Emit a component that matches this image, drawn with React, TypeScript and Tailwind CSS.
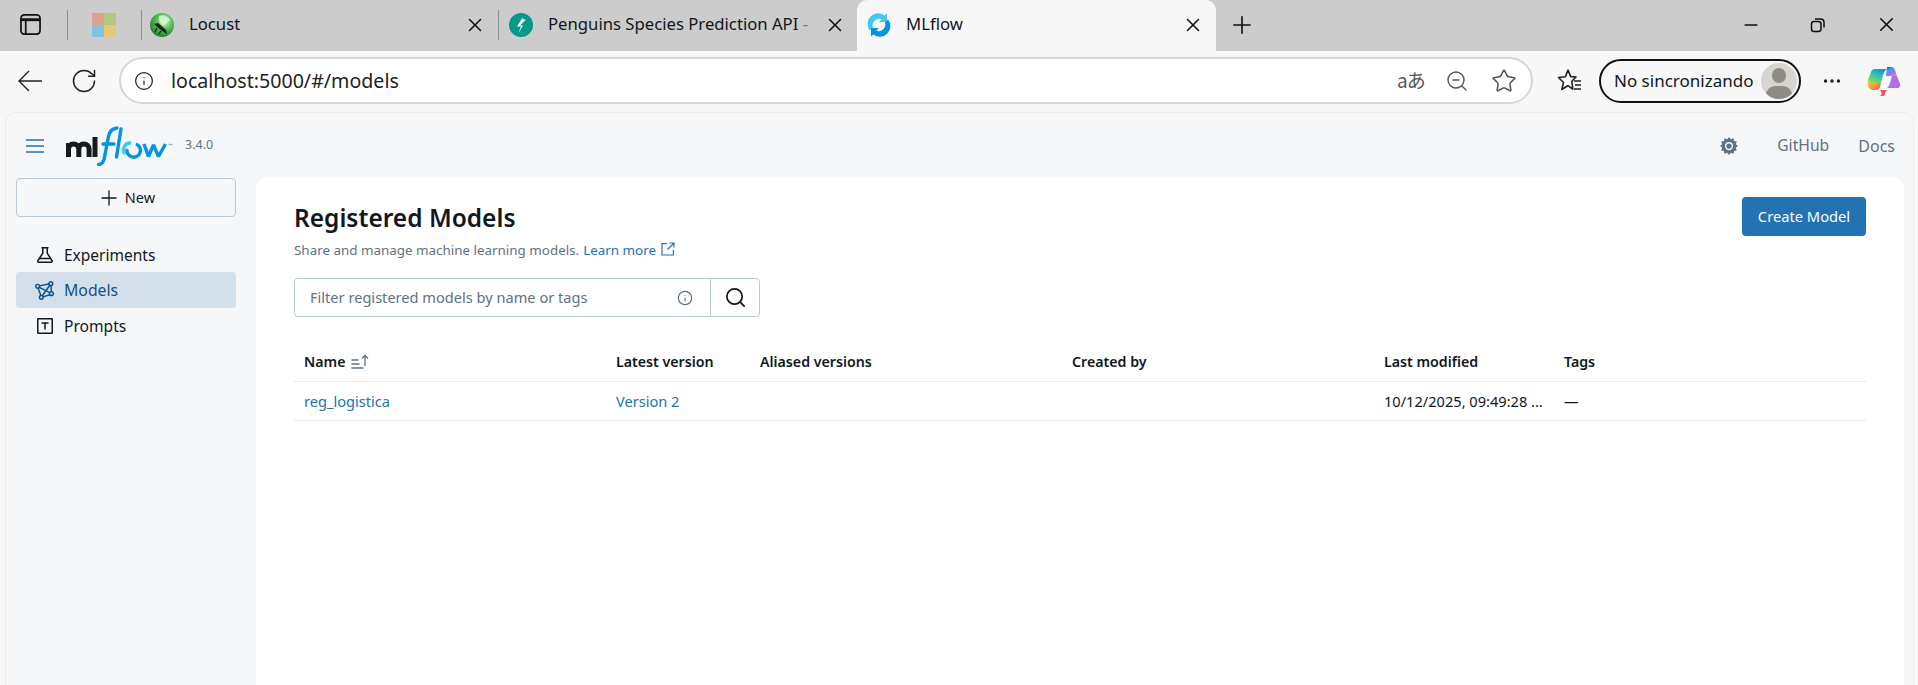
import React from "react";
import { RotateCw, Info, Plus, X, Minus, Star, ZoomOut, Search, MoreHorizontal } from "lucide-react";

const Divider = () => <div className="w-px h-[30px] bg-[#8f8f8f] shrink-0" />;

function LocustIcon() {
  return (
    <svg viewBox="0 0 24 24" className="w-6 h-6 shrink-0">
      <defs>
        <radialGradient id="lg" cx="0.6" cy="0.35" r="0.75">
          <stop offset="0" stopColor="#c9f2c0" />
          <stop offset="0.45" stopColor="#58bd57" />
          <stop offset="1" stopColor="#14702c" />
        </radialGradient>
      </defs>
      <circle cx="12" cy="12" r="12" fill="url(#lg)" />
      <path d="M9 3c4-2 9 0 11 4l-6 6c-3-1-6-5-5-10z" fill="#d9f7d0" opacity=".8" />
      <path d="M4 11l8 7 5 3-1-4-8-7z" fill="#102418" />
      <path d="M7 15l-2 4M11 18l-2 3" stroke="#102418" strokeWidth="1.200" />
    </svg>
  );
}
function FastIcon() {
  return (
    <svg viewBox="0 0 24 24" className="w-6 h-6 shrink-0">
      <circle cx="12" cy="12" r="12" fill="#05998b" />
      <path d="M14 4L8 13.500h4L9.500 20l4.500-7.500h-3L17 6.500h-3.500z" fill="#fff" />
    </svg>
  );
}
function FlowFavicon() {
  return (
    <svg viewBox="0 0 24 24" className="w-6 h-6 shrink-0">
      <path d="M3 17.500A10.500 10.500 0 0 1 17.500 2.500L20 .5v8.500h-8l2.600-2.600A6.500 6.500 0 0 0 6 14.500z" fill="#43c9ed" />
      <path d="M21 6.500A10.500 10.500 0 0 1 6.500 21.500L4 23.500V15h8l-2.600 2.600A6.500 6.500 0 0 0 18 9.500z" fill="#0194e2" />
    </svg>
  );
}
function Copilot() {
  return (
    <svg viewBox="0 0 34 32" className="w-[34px] h-8 ml-[24px] shrink-0">
      <defs>
        <linearGradient id="cg1" x1="0.7" y1="0" x2="0.2" y2="1"><stop offset="0" stopColor="#1e88e5" /><stop offset="0.45" stopColor="#2fc6b0" /><stop offset="1" stopColor="#9bd94a" /></linearGradient>
        <linearGradient id="cg2" x1="0.3" y1="0" x2="0.7" y2="1"><stop offset="0" stopColor="#1d6fe0" /><stop offset="0.3" stopColor="#3aa0ee" /><stop offset="0.7" stopColor="#a46fe6" /><stop offset="1" stopColor="#e783c8" /></linearGradient>
        <linearGradient id="cg3" x1="0" y1="0" x2="1" y2="1"><stop offset="0" stopColor="#f8d23a" /><stop offset="0.55" stopColor="#f49a3d" /><stop offset="1" stopColor="#e8486a" /></linearGradient>
      </defs>
      <path d="M8 4h12c-2 1-3 3-4 6l-2 8H4c-2 0-3.500-1-3-3l3-8c.6-2 2-3 4-3z" fill="url(#cg1)" />
      <path d="M1 15c.3 2 2 3 4 3h9l-1 4c-.6 2-2 3-4 3H6c-3 0-6-3-5-10z" fill="url(#cg3)" />
      <path d="M20 2h4c2 0 3.200 1 4 3l2 6H19z" fill="url(#cg2)" />
      <path d="M19 11h11l3 8c.8 2-.5 4-3 4H20c1.500-1 2.500-3 3-5l2-7z" fill="#b06fe2" />
      <path d="M13 25h7c-3 3-1 6-4 6h-3c2-1 2-3 0-6z" fill="#ee5a4f" />
      <path d="M18 12h5l-2.500 9c-.3 1-1 2-2.500 2h-4z" fill="#fff" />
    </svg>
  );
}
function Logo() {
  return (
    <svg viewBox="0 0 108 40" className="w-[108px] h-[40px] shrink-0">
      <g fill="none" stroke="#16191d" strokeWidth="5">
        <path d="M2.500 31V17" />
        <path d="M2.500 23c0-3 2-5 5-5s5.300 2 5.300 5v8" />
        <path d="M12.800 23c0-3 2-5 5-5s5.300 2 5.300 5v8" />
        <path d="M29 11v20" />
      </g>
      <g fill="none" stroke="#0194e2" strokeWidth="3.400" strokeLinecap="round">
        <path d="M32.500 38.500c3 0 4.500-2 5.500-5l4.500-23c1-5 3-8 8.500-8.500" />
        <path d="M37 18h11" />
        <path d="M55 3l-4.500 28" />
        <path d="M78 18l4.500 12.500 5-11.500 5 11.500 7-12.500" strokeLinecap="butt" strokeLinejoin="bevel" />
      </g>
      <path d="M70 18a6.800 6.800 0 1 1-9 5" fill="none" stroke="#0194e2" strokeWidth="3.400" />
      <path d="M59 28a6.800 6.800 0 0 1 6-11" fill="none" stroke="#43c9ed" strokeWidth="3.400" />
      <path d="M102.500 18.500h4" stroke="#9fb8c8" strokeWidth="1.400" />
    </svg>
  );
}
function ModelsIcon() {
  return (
    <svg viewBox="0 0 18 18" className="w-[19px] h-[19px] shrink-0" fill="none" stroke="currentColor" strokeWidth="1.400">
      <circle cx="2.500" cy="5" r="1.800" /><circle cx="15" cy="2.500" r="1.800" /><circle cx="6" cy="15.500" r="1.800" /><circle cx="15.500" cy="12" r="1.800" />
      <path d="M4.200 4.600l9-1.800M3 6.800l2.500 7M7.700 15l6.200-2M15.200 4.300l.2 5.900M4.100 6l9.900 5M14 4L7 14" />
    </svg>
  );
}
function PromptIcon() {
  return (
    <svg viewBox="0 0 18 18" className="w-[18px] h-[18px] shrink-0" fill="none" stroke="currentColor" strokeWidth="1.500">
      <rect x="1.750" y="1.750" width="14.500" height="14.500" rx=".5" />
      <path d="M5.500 6h7M9 6v6.500" />
    </svg>
  );
}
function Flask() {
  return (
    <svg viewBox="0 0 18 18" className="w-[18px] h-[18px] shrink-0" fill="none" stroke="currentColor" strokeWidth="1.500" strokeLinejoin="round">
      <path d="M5.500 1.750h7M6.750 1.750v5.500L2 14.500c-.6 1 .1 1.750 1 1.750h12c.9 0 1.600-.75 1-1.750l-4.750-7.250v-5.500" />
      <path d="M3.500 12.500h11" />
    </svg>
  );
}
function Gear() {
  return (
    <svg viewBox="0 0 24 24" className="w-[18px] h-[18px] shrink-0" fill="#5f7281">
      <path fillRule="evenodd" d="M12 0l2.400 3 3.700-1.400.6 3.700 3.700.6L21 9.600 24 12l-3 2.400 1.400 3.700-3.700.6-.6 3.700L14.400 21 12 24l-2.400-3-3.700 1.400-.6-3.700-3.700-.6L3 14.400 0 12l3-2.400L1.600 5.900l3.700-.6.6-3.700L9.600 3zM12 6.500a5.500 5.500 0 1 0 0 11 5.500 5.500 0 0 0 0-11z" />
      <circle cx="12" cy="12" r="3.500" />
    </svg>
  );
}

const font = "font-['Noto_Sans','Open_Sans',sans-serif]";
const cols = "grid grid-cols-[312px_144px_312px_312px_180px_1fr] items-center pl-[10px] w-[1572px] h-[39px] border-b border-[#e8ecf0]";

export default function App() {
  return (
    <div className={`h-[685px] w-[1918px] overflow-hidden flex flex-col bg-[#f7f7f7] text-[#11171c] ${font}`}>
      {/* Tab strip */}
      <div className="h-[51px] bg-[#cccccc] flex items-center pl-5 pb-[2px] shrink-0">
        <svg viewBox="0 0 22 22" className="w-[21px] h-[21px] shrink-0" fill="none" stroke="#111" strokeWidth="1.800">
          <rect x="1" y="1" width="20" height="20" rx="3.500" />
          <path d="M1 6h20" strokeWidth="3" />
          <path d="M6 6v15" />
        </svg>
        <div className="ml-[26px]"><Divider /></div>
        <div className="ml-[24px] grid grid-cols-2 w-[24px] h-[24px] shrink-0">
          <div className="bg-[#e0a08e]" /><div className="bg-[#b2c97e]" /><div className="bg-[#82c1df]" /><div className="bg-[#e4c97b]" />
        </div>
        <div className="ml-[25px]"><Divider /></div>
        <div className="w-[356px] flex items-center pl-2 pr-[12px] shrink-0">
          <LocustIcon />
          <span className="ml-[15px] text-[16.7px] leading-6 flex-1 -mt-[1px]">Locust</span>
          <X size={22} strokeWidth={1.7} color="#111" />
        </div>
        <Divider />
        <div className="w-[358px] flex items-center pl-[10px] pr-[11px] shrink-0">
          <FastIcon />
          <span className="ml-[15px] text-[16.7px] leading-6 flex-1 whitespace-nowrap overflow-hidden -mt-[1px]">Penguins Species Prediction API <span className="text-[#777]">-</span></span>
          <X size={22} strokeWidth={1.7} color="#111" className="ml-2 shrink-0" />
        </div>
        <div className="w-[359px] h-[51px] -mb-[2px] bg-[#f7f7f7] rounded-t-[10px] flex items-center pl-[10px] pr-[12px] pb-[2px] shrink-0">
          <FlowFavicon />
          <span className="ml-[15px] text-[16.7px] leading-6 flex-1 -mt-[1px]">MLflow</span>
          <X size={22} strokeWidth={1.7} color="#111" />
        </div>
        <Plus size={28} strokeWidth={1.4} color="#111" className="ml-[12px]" />
        <div className="flex-1" />
        <Minus size={20} strokeWidth={2} color="#111" />
        <svg viewBox="0 0 16 16" className="w-[16px] h-[17px] ml-[49px]" fill="none" stroke="#111" strokeWidth="1.500">
          <rect x="1.500" y="5" width="9.500" height="10" rx="2.500" />
          <path d="M5 2.500h5.500c2 0 3.500 1.500 3.500 3.500v5" />
        </svg>
        <X size={23} strokeWidth={1.7} color="#111" className="ml-[49px] mr-[20px]" />
      </div>
      {/* Toolbar */}
      <div className="h-[59px] flex items-start pt-[6px] shrink-0 pl-[18px]">
        <div className="h-[47px] flex items-center pt-[1px]">
          <svg viewBox="0 0 24 22" className="w-6 h-[22px]" fill="none" stroke="#222" strokeWidth="1.400"><path d="M24 11H1M11 1L1 11l10 10" /></svg>
        </div>
        <div className="h-[47px] flex items-center ml-[30px] pt-[1px]"><RotateCw size={28} strokeWidth={1.3} color="#222" className="-mx-[2px]" /></div>
        <div className="ml-[23px] w-[1414px] h-[47px] rounded-full bg-white border-2 border-[#d6d6d6] flex items-center pl-[13px] pr-[14px]">
          <Info size={20} strokeWidth={1.5} color="#222" className="mt-[1px]" />
          <span className="ml-[17px] text-[19.600px] leading-7 flex-1 text-[#222] whitespace-nowrap mt-[1px]">localhost:5000/#/models</span>
          <span className="text-[19px] text-[#555] tracking-[-1px] w-[30px] whitespace-nowrap font-['Noto_Sans_CJK_JP','Noto_Sans',sans-serif]">aあ</span>
          <ZoomOut size={24} strokeWidth={1.4} color="#555" className="ml-[18px]" />
          <Star size={26} strokeWidth={1.4} color="#555" className="ml-[22px]" />
        </div>
        <div className="h-[47px] flex items-center ml-[24px]">
          <svg viewBox="0 0 26 26" className="w-[26px] h-[26px]" fill="none" stroke="#222" strokeWidth="1.600" strokeLinejoin="round">
            <path d="M11 2l2.700 6.600 5.300.4-4.200 4.200 1 8-5-3.500-6 3.800 1.700-7L1.500 9.500l7-.7z" />
            <path d="M17 13h7M18 17h6M17 21h7" />
          </svg>
          <div className="ml-[16px] w-[202px] h-[44px] rounded-full border-2 border-[#111] flex items-center pl-[13px] pr-[2px]">
            <span className="text-[17px] flex-1 whitespace-nowrap">No sincronizando</span>
            <div className="w-[36px] h-[36px] rounded-full bg-[#d6d5d0] overflow-hidden relative shrink-0">
              <div className="absolute left-[11px] top-[5px] w-[14px] h-[15px] rounded-full bg-[#8f8c86]" />
              <div className="absolute left-[5px] top-[23px] w-[26px] h-[18px] rounded-full bg-[#8f8c86]" />
            </div>
          </div>
          <MoreHorizontal size={22} strokeWidth={1.8} color="#222" className="ml-[20px]" />
          <Copilot />
        </div>
      </div>
      {/* Page */}
      <div className="flex-1 ml-[5px] mr-[4px] mt-[2px] bg-[#f6f7f9] rounded-t-[10px] border border-[#ececec] border-b-0 flex flex-col min-h-0">
        <div className="h-[65px] flex items-center pl-[20px] pr-[18px] shrink-0">
          <svg viewBox="0 0 18 14" className="w-[18px] h-[14px] shrink-0" fill="none" stroke="#2272b4" strokeWidth="1.500"><path d="M0 1h18M0 7h18M0 13h18" /></svg>
          <div className="ml-[22px]"><Logo /></div>
          <span className="ml-[11px] text-[12.500px] text-[#5f7281]">3.4.0</span>
          <div className="flex-1" />
          <Gear />
          <span className="ml-[39px] text-[15.700px] text-[#5f7281]">GitHub</span>
          <span className="ml-[29px] text-[16px] text-[#5f7281]">Docs</span>
        </div>
        <div className="flex flex-1 min-h-0 pl-[10px]">
          <div className="w-[220px] shrink-0">
            <div className="h-[39px] rounded border border-[#b9c8d6] flex items-center justify-center gap-[4px] text-[14.500px]">
              <Plus size={24} strokeWidth={1.3} />New
            </div>
            <div className="mt-[20px] h-[35px] flex items-center gap-[10px] pl-[20px] text-[15.500px]"><Flask /><span className="mt-[2px]">Experiments</span></div>
            <div className="h-[36px] flex items-center gap-[10px] pl-[19px] text-[15.800px] rounded bg-[#d3e0ec] text-[#0e5289]"><ModelsIcon /><span className="mt-[2px]">Models</span></div>
            <div className="h-[36px] flex items-center gap-[10px] pl-[20px] text-[15.600px]"><PromptIcon /><span className="mt-[2px]">Prompts</span></div>
          </div>
          <div className="ml-[20px] w-[1648px] bg-white rounded-t-[10px] pl-[38px] pr-[38px] pt-[19px]">
            <div className="flex justify-between items-start">
              <div>
                <h1 className="text-[24.500px] font-semibold leading-[32px] mt-[5px]">Registered Models</h1>
                <p className="text-[13.400px] leading-[18px] mt-[7px] text-[#5f7281] flex items-center gap-[4px] whitespace-nowrap">
                  Share and manage machine learning models.
                  <span className="text-[#2272b4] flex items-center gap-[5px]">Learn more
                    <svg viewBox="0 0 14 14" className="w-[14px] h-[14px] -mt-[2px]" fill="none" stroke="currentColor" strokeWidth="1.200"><path d="M6 1.600H1v11.400h11.400V8M8.500 1h4.500v4.500M13 1L6.500 7.500" /></svg>
                  </span>
                </p>
              </div>
              <button className="w-[124px] h-[39px] bg-[#2272b4] text-white text-[14.700px] rounded">Create Model</button>
            </div>
            <div className="mt-[19px] w-[466px] h-[39px] border border-[#b9c8d6] rounded flex items-center">
              <span className="pl-[15px] flex-1 text-[14.600px] text-[#5f7281] whitespace-nowrap pt-[1px]">Filter registered models by name or tags</span>
              <Info size={16} strokeWidth={1.8} color="#5f7281" className="mr-[17px]" />
              <div className="w-[49px] h-full border-l border-[#b9c8d6] flex items-center justify-center">
                <Search size={23} strokeWidth={1.8} color="#11171c" />
              </div>
            </div>
            <div className={`${cols} mt-[26px] text-[14.200px] font-semibold`}>
              <div className="flex items-center gap-[6px]">Name
                <svg viewBox="0 0 18 16" className="w-[19px] h-[16px]" fill="none" stroke="#5f7281" strokeWidth="1.300">
                  <path d="M0 6h7M0 10h8M0 14h12M13.500 12V1.500M10.500 4.500l3-3 3 3" />
                </svg>
              </div>
              <div>Latest version</div><div>Aliased versions</div><div>Created by</div><div>Last modified</div><div>Tags</div>
            </div>
            <div className={`${cols} text-[14.600px] pt-[2px]`}>
              <div className="text-[#2272b4]">reg_logistica</div>
              <div className="text-[#2272b4]">Version 2</div>
              <div /><div />
              <div className="whitespace-nowrap">10/12/2025, 09:49:28 ...</div>
              <div>—</div>
            </div>
          </div>
        </div>
      </div>
    </div>
  );
}
